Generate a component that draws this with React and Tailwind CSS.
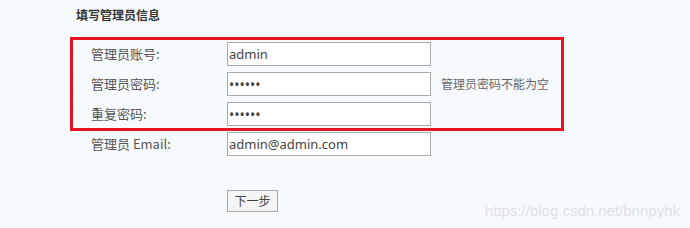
import React from "react";

const font = { fontFamily: '"Noto Sans CJK SC", "Noto Sans", sans-serif' };

function Row({ label, children, extra }) {
  return (
    <div className="flex items-center h-[24px]">
      <div className="w-[136px] text-[13px] text-[#555]">{label}</div>
      {children}
      {extra}
    </div>
  );
}

function Field({ value, type = "text" }) {
  return (
    <input
      readOnly
      type={type}
      value={value}
      className={
        "w-[204px] h-[24px] bg-white border border-[#a9a9a9] px-[1px] text-[#444] outline-none " +
        (type === "password" ? "text-[14px]" : "text-[13px]")
      }
      style={{ fontFamily: '"Noto Sans", "DejaVu Sans", sans-serif' }}
    />
  );
}

export default function App() {
  return (
    <div
      className="relative w-[690px] h-[228px] bg-[#f7fafd] overflow-hidden pl-[70px] pt-[6px]"
      style={font}
    >
      <div className="ml-[6px] h-[18px] leading-[18px] text-[12px] font-bold text-[#333]">
        填写管理员信息
      </div>
      <div className="mt-[13px] w-[494px] border-[3px] border-[#e5161f] pl-[18px] pt-[2px] pb-[2px] flex flex-col gap-[6px]">
        <Row label="管理员账号:">
          <Field value="admin" />
        </Row>
        <Row
          label="管理员密码:"
          extra={<span className="ml-[10px] text-[12px] text-[#666]">管理员密码不能为空</span>}
        >
          <Field value="aaaaaa" type="password" />
        </Row>
        <Row label="重复密码:">
          <Field value="aaaaaa" type="password" />
        </Row>
      </div>
      <div className="mt-[1px] pl-[21px]">
        <Row label="管理员 Email:">
          <Field value="admin@admin.com" />
        </Row>
      </div>
      <div className="mt-[31px] pl-[157px]">
        <button className="w-[51px] h-[22px] bg-[#f5f5f5] border border-[#a9a9a9] text-[12px] text-[#444] leading-none">
          下一步
        </button>
      </div>
      <div
        className="absolute right-[10px] bottom-[6px] text-[15px] text-[#dde1e6]"
        style={{ fontFamily: '"Liberation Sans", Arial, sans-serif' }}
      >
        https://blog.csdn.net/bnnpyhk
      </div>
    </div>
  );
}
